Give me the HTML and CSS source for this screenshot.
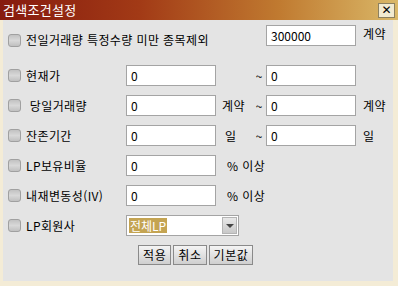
FILE: index.html
```html
<!DOCTYPE html>
<html lang="ko">
<head>
  <meta charset="UTF-8">
  <title>검색조건설정</title>
  <link rel="stylesheet" href="styles.css">
</head>
<body>
  <div class="dialog">
    <div class="titlebar">
      <span class="title">검색조건설정</span>
      <span class="close">✕</span>
    </div>
    <div class="panel">
      <div class="row row-first">
        <label class="opt span-wide"><span class="chk"></span>전일거래량 특정수량 미만 종목제외</label>
        <input class="field col-to" value="300000">
        <span class="unit-end">계약</span>
      </div>
      <div class="row">
        <label class="opt"><span class="chk"></span>현재가</label>
        <input class="field" value="0">
        <span class="unit"></span>
        <span class="tilde">~</span>
        <input class="field" value="0">
      </div>
      <div class="row">
        <label class="opt"><span class="chk"></span>&nbsp;당일거래량</label>
        <input class="field" value="0">
        <span class="unit">계약</span>
        <span class="tilde">~</span>
        <input class="field" value="0">
        <span class="unit-end">계약</span>
      </div>
      <div class="row">
        <label class="opt"><span class="chk"></span>잔존기간</label>
        <input class="field" value="0">
        <span class="unit unit-day">일</span>
        <span class="tilde">~</span>
        <input class="field" value="0">
        <span class="unit-end unit-day">일</span>
      </div>
      <div class="row">
        <label class="opt"><span class="chk"></span>LP보유비율</label>
        <input class="field" value="0">
        <span class="unit unit-pct">% 이상</span>
      </div>
      <div class="row">
        <label class="opt"><span class="chk"></span>내재변동성(IV)</label>
        <input class="field" value="0">
        <span class="unit unit-pct">% 이상</span>
      </div>
      <div class="row">
        <label class="opt"><span class="chk"></span>LP회원사</label>
        <div class="combo">
          <span class="combo-text">전체LP</span>
          <span class="combo-btn"></span>
        </div>
      </div>
      <div class="actions">
        <button class="btn">적용</button>
        <button class="btn">취소</button>
        <button class="btn">기본값</button>
      </div>
    </div>
  </div>
</body>
</html>
```

FILE: styles.css
```css
body {
  margin: 0;
  font-family: "Noto Sans CJK KR", "Noto Sans", sans-serif;
  font-size: 12px;
  color: #000;
  background: #e4e4e4;
}
.dialog {
  width: 398px;
  height: 286px;
  display: flex;
  flex-direction: column;
  background: #f4ecd6;
}
.titlebar {
  height: 20px;
  display: flex;
  align-items: center;
  justify-content: space-between;
  padding: 0 3px;
  background: linear-gradient(90deg, #861a0e 0%, #a23a16 35%, #c07a30 70%, #dab868 100%);
}
.title {
  color: #fff;
  font-size: 13px;
  line-height: 16px;
  letter-spacing: 0.3px;
}
.close {
  width: 17px;
  height: 15px;
  box-sizing: border-box;
  border: 1px solid #8c8060;
  background: #f2ead0;
  font-size: 12px;
  line-height: 13px;
  text-align: center;
  font-weight: bold;
  font-family: "DejaVu Sans", sans-serif;
}
.panel {
  flex: 1;
  margin: 0 5px 5px 3px;
  padding-top: 5px;
  background: #e4e4e4;
}
.row {
  display: grid;
  grid-template-columns: 123px 90px 36px 14px 90px auto;
  align-items: center;
  height: 21px;
  margin-bottom: 9px;
}
.row-first {
  align-items: start;
  margin-bottom: 19px;
}
.opt {
  display: flex;
  align-items: center;
  gap: 5px;
  padding-left: 5px;
  line-height: 14px;
  white-space: nowrap;
  letter-spacing: 0.4px;
}
.span-wide {
  grid-column: 1 / 5;
  padding-top: 8px;
}
.col-to {
  grid-column: 5;
}
.chk {
  width: 13px;
  height: 13px;
  box-sizing: border-box;
  flex: none;
  border: 1px solid #a0a0a0;
  border-radius: 3px;
  background: linear-gradient(180deg, #c2c2c2, #d8d8d8 50%, #c0c0c0);
}
.field {
  width: 90px;
  height: 21px;
  box-sizing: border-box;
  margin: 0;
  padding: 0 4px;
  border: 1px solid #a4a4a4;
  background: #fff;
  font: inherit;
  line-height: 19px;
  color: #000;
}
.unit {
  padding-left: 6px;
  letter-spacing: 0.4px;
}
.unit-day {
  padding-left: 9px;
}
.unit-pct {
  grid-column: 3 / 6;
  padding-left: 11px;
}
.tilde {
  text-align: center;
}
.unit-end {
  padding-left: 7px;
  letter-spacing: 0.4px;
}
.combo {
  grid-column: 2 / 4;
  width: 113px;
  height: 21px;
  box-sizing: border-box;
  display: flex;
  align-items: center;
  justify-content: space-between;
  padding: 0 1px 0 2px;
  border: 1px solid #a4a4a4;
  background: #fff;
}
.combo-text {
  background: #c4a452;
  color: #fff;
  line-height: 15px;
  padding: 0 1px;
}
.combo-btn {
  width: 15px;
  height: 17px;
  box-sizing: border-box;
  border: 1px solid #b4b4b4;
  background: linear-gradient(180deg, #e8e8e8, #c8c8c8);
  position: relative;
}
.combo-btn::after {
  content: "";
  position: absolute;
  left: 3px;
  top: 6px;
  border-left: 4px solid transparent;
  border-right: 4px solid transparent;
  border-top: 4px solid #444;
}
.actions {
  display: flex;
  gap: 2px;
  padding-left: 135px;
  margin-top: 5px;
}
.btn {
  height: 20px;
  padding: 0 4px;
  border: 1px solid #8a8a8a;
  background: linear-gradient(180deg, #f4f4f4, #cfcfcf);
  font: inherit;
  letter-spacing: 0.6px;
  line-height: 16px;
  color: #000;
}
```
